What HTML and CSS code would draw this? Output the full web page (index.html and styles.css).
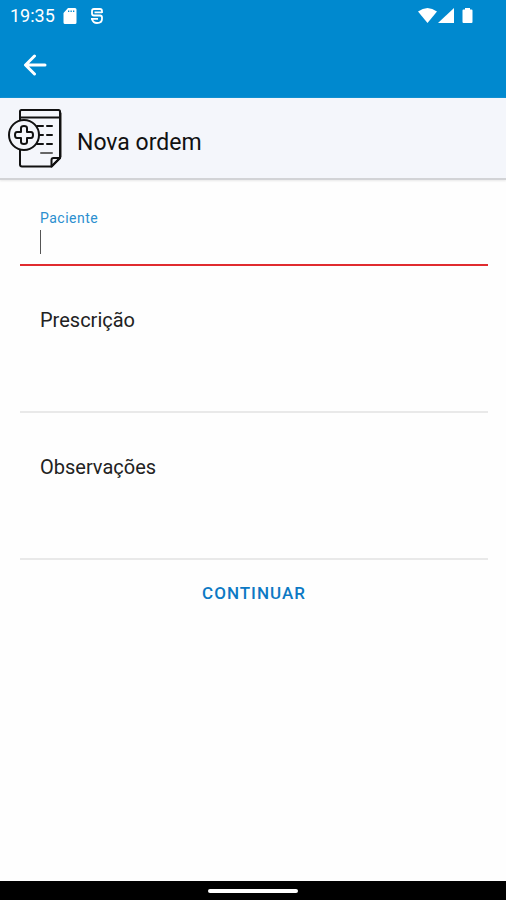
FILE: index.html
```html
<!DOCTYPE html>
<html lang="pt-BR">
<head>
<meta charset="utf-8">
<meta name="viewport" content="width=device-width, initial-scale=1">
<title>Nova ordem</title>
<link rel="stylesheet" href="styles.css">
</head>
<body>
<div class="status-bar">
  <span class="clock">19:35</span>
  <svg class="status-icon" width="14" height="16" viewBox="0 0 14 16" aria-hidden="true"><path fill="currentColor" fill-rule="evenodd" d="M5 0h7q1.500 0 1.500 1.500v13q0 1.500-1.500 1.500H2Q.5 16 .5 14.500V5zM5 2.500v1.500h1.300v-1.500zm2.500 0v1.500h1.300v-1.500zm2.500 0v1.500h1.300v-1.500z"/></svg>
  <svg class="status-icon debug-icon" width="14" height="16" viewBox="0 0 14 16" fill="none" stroke="currentColor" stroke-width="1.800" aria-hidden="true"><path d="M12 5V3q0-2-2-2H4Q2 1 2 3v2.500q0 2 2 2h6q2 0 2 2V11q0 4-5 4-4 0-5-4M4.500 4.300H12M1 10.800h7"/></svg>
  <span class="spacer"></span>
  <svg width="56" height="18" viewBox="0 0 56 18" fill="currentColor" aria-hidden="true"><path d="M0 4.500Q9.500-2.500 19 4.500L9.500 16z"/><path d="M36 1v15H20z"/><path d="M47 1h5v1.500h1.500q1 0 1 1V15q0 1-1 1h-8q-1 0-1-1V3.500q0-1 1-1H47z"/></svg>
</div>
<header class="app-bar">
  <button class="back" type="button" aria-label="Voltar">
    <svg width="24" height="22" viewBox="0 0 24 22" fill="none" stroke="currentColor" stroke-width="3" stroke-linecap="round" stroke-linejoin="round" aria-hidden="true"><path d="M11.500 2 2.500 11l9 9M3 11h19"/></svg>
  </button>
</header>
<div class="title-bar">
  <svg width="54" height="60" viewBox="0 0 54 60" fill="none" stroke="#111" stroke-width="2" stroke-linecap="round" stroke-linejoin="round" aria-hidden="true">
    <path d="M12 12V3.500Q12 2 13.500 2h37Q52 2 52 3.500V50L43.500 58.500H14Q12 58.500 12 56.500V42M12 9.500h40"/>
    <path stroke="#888" stroke-width="1" d="M53.500 5v44"/>
    <path d="M43.500 58.500V52q0-2 2-2H52z"/>
    <path d="M29 18h6m4 0h5M31 27h4m4 0h5M29 36h6m4 0h5"/>
    <path stroke="#666" d="M33 45h11"/>
    <circle cx="16" cy="27" r="15" fill="#f4f6fb"/>
    <path d="M13 24v-4q0-2 3-2t3 2v4h4q2 0 2 3t-2 3h-4v4q0 2-3 2t-3-2v-4H9q-2 0-2-3t2-3z"/>
  </svg>
  <h1>Nova ordem</h1>
</div>
<form class="order-form">
  <div class="field field-active">
    <label for="patient">Paciente</label>
    <div class="entry"><input id="patient" type="text" autocomplete="off"><span class="caret"></span></div>
  </div>
  <div class="field">
    <label for="prescription">Prescrição</label>
    <textarea id="prescription"></textarea>
  </div>
  <div class="field">
    <label for="notes">Observações</label>
    <textarea id="notes"></textarea>
  </div>
  <button class="continue" type="button">CONTINUAR</button>
</form>
<footer class="nav-bar"><span class="home-handle"></span></footer>
</body>
</html>
```
FILE: styles.css
```css
* {
  box-sizing: border-box;
}

body {
  margin: 0;
  min-height: 100vh;
  display: flex;
  flex-direction: column;
  background: #fefefe;
  color: #222;
  font-family: Roboto, "Liberation Sans", sans-serif;
}

button,
input,
textarea {
  border: 0;
  outline: 0;
  padding: 0;
  background: transparent;
  font: inherit;
  color: inherit;
}

.status-bar {
  display: flex;
  align-items: center;
  height: 32px;
  padding: 0 32px 0 10px;
  background: #0089cf;
  color: #fff;
}

.clock {
  font-size: 18px;
  line-height: 32px;
}

.status-icon {
  margin-left: 8px;
}

.debug-icon {
  margin-left: 13px;
}

.spacer {
  flex: 1;
}

.app-bar {
  display: flex;
  align-items: center;
  height: 66px;
  padding: 0 23px;
  background: #0089cf;
  color: #fff;
}

.back {
  display: flex;
}

.title-bar {
  display: flex;
  align-items: center;
  gap: 15px;
  height: 82px;
  padding: 0 8px;
  background: #f4f6fb;
  border-bottom: 2px solid #d2d3d6;
  box-shadow: 0 1px 2px #e8e8e8;
}

h1 {
  margin: 10px 0 0;
  font-size: 23px;
  line-height: 28px;
  font-weight: 400;
  color: #111;
}

.order-form {
  flex: 1;
  display: flex;
  flex-direction: column;
  align-items: center;
  padding: 0 18px 0 20px;
}

.field {
  display: flex;
  flex-direction: column;
  width: 100%;
  padding: 40px 20px 0;
  border-bottom: 2px solid #e9e9e9;
}

.field label {
  font-size: 20px;
  line-height: 28px;
}

.field textarea {
  height: 77px;
  resize: none;
}

.field-active {
  padding-top: 28px;
  border-bottom-color: #e02b2f;
}

.field-active label {
  color: #2b8fcf;
  font-size: 14px;
  line-height: 20px;
  letter-spacing: 0.5px;
}

.entry {
  position: relative;
  height: 36px;
}

.entry input {
  width: 100%;
  height: 28px;
  font-size: 20px;
  caret-color: transparent;
}

.caret {
  position: absolute;
  top: 2px;
  left: 0;
  width: 1px;
  height: 24px;
  background: #555;
}

.continue {
  margin-top: 15px;
  padding: 0 16px;
  font-size: 17px;
  line-height: 36px;
  font-weight: 500;
  letter-spacing: 1px;
  color: #0c79c4;
}

.nav-bar {
  display: flex;
  align-items: center;
  justify-content: center;
  height: 19px;
  background: #000;
}

.home-handle {
  width: 90px;
  height: 4px;
  border-radius: 2px;
  background: #fff;
}
```
